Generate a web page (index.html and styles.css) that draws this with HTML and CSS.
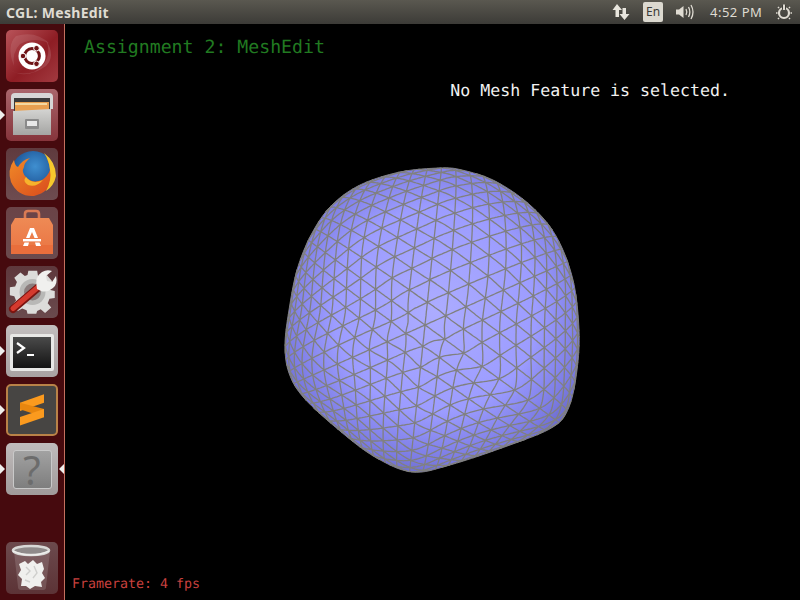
FILE: index.html
```html
<!DOCTYPE html>
<html lang="en">
<head>
    <meta charset="UTF-8">
    <title>CGL: MeshEdit</title>
    <link rel="stylesheet" href="styles.css">
</head>
<body>

<!-- Top Panel -->
<header class="panel">
    <span class="panel-title">CGL: MeshEdit</span>
    <div class="indicators">
        <svg class="ind-network" width="18" height="18" viewBox="0 0 18 18">
            <path d="M5 1 L10 7 H7 V14 H3.5 V7 H0.5 Z" fill="#e8e5dd"/>
            <path d="M12.5 17 L7.5 11 H10.5 V5 H14 V11 H17.5 Z" fill="#e8e5dd"/>
        </svg>
        <span class="ind-lang">En</span>
        <svg class="ind-sound" width="21" height="18" viewBox="0 0 21 18">
            <path d="M1 6.5 H4 L8.5 3 V15 L4 11.5 H1 Z" fill="#dfdbd2"/>
            <path d="M11 6 Q12.6 9 11 12" fill="none" stroke="#dfdbd2" stroke-width="1.3"/>
            <path d="M13.5 4 Q16.2 9 13.5 14" fill="none" stroke="#dfdbd2" stroke-width="1.3"/>
            <path d="M16 2 Q20 9 16 16" fill="none" stroke="#dfdbd2" stroke-width="1.3"/>
        </svg>
        <span class="ind-time">4:52 PM</span>
        <svg class="ind-power" width="16" height="18" viewBox="0 0 16 18">
            <circle cx="8" cy="10" r="5" fill="none" stroke="#dfdbd2" stroke-width="2.2"/>
            <path d="M8 2 V6.5" stroke="#3f3e39" stroke-width="4"/>
            <path d="M8 1.5 V7" stroke="#dfdbd2" stroke-width="2"/>
            <path d="M1.5 10 H0 M16 10 H14.5 M3 15 L2 16 M13 15 L14 16 M3 5 L2 4 M13 5 L14 4" stroke="#dfdbd2" stroke-width="1.6"/>
        </svg>
    </div>
</header>

<div class="desktop">
    <!-- Launcher -->
    <nav class="launcher">
        <div class="tile tile-dash">
            <svg width="52" height="52" viewBox="0 0 52 52">
                <path d="M4 40 Q20 50 40 36 Q50 26 40 10 Q48 30 28 42 Q14 46 4 40 Z" fill="#fff" opacity="0.13"/>
                <path d="M10 6 Q30 0 44 14 Q30 6 14 14 Q6 22 8 36 Q0 16 10 6 Z" fill="#fff" opacity="0.1"/>
                <circle cx="26" cy="26" r="13.5" fill="#fff"/>
                <circle cx="26" cy="26" r="7.4" fill="none" stroke="#6f1417" stroke-width="3"/>
                <g fill="#6f1417" stroke="#fff" stroke-width="1">
                    <circle cx="17" cy="26" r="2.8"/>
                    <circle cx="30.5" cy="18.2" r="2.8"/>
                    <circle cx="30.5" cy="33.8" r="2.8"/>
                </g>
            </svg>
        </div>
        <div class="tile tile-files running">
            <svg width="52" height="52" viewBox="0 0 52 52">
                <defs>
                    <linearGradient id="cabinetFront" x1="0" y1="0" x2="0" y2="1">
                        <stop offset="0" stop-color="#d4d4d2"/>
                        <stop offset="1" stop-color="#a5a5a3"/>
                    </linearGradient>
                </defs>
                <path d="M5 8 Q5 4 9 4 H43 Q47 4 47 8 V20 H5 Z" fill="#d6d6d6"/>
                <rect x="8" y="9" width="36" height="14" fill="#3a3a3a"/>
                <rect x="9" y="13" width="34" height="11" fill="#e8a050"/>
                <rect x="9" y="14" width="32" height="2" fill="#f4d8a0"/>
                <path d="M7 22 L45 20 V46 H7 Z" fill="url(#cabinetFront)"/>
                <rect x="19" y="30" width="14" height="10" rx="1" fill="#8a8a8a"/>
                <rect x="21" y="32" width="10" height="5" fill="#e8e8e8"/>
            </svg>
        </div>
        <div class="tile tile-firefox">
            <svg width="52" height="52" viewBox="0 0 52 52">
                <defs>
                    <radialGradient id="foxGlobe" cx="0.55" cy="0.35" r="0.6">
                        <stop offset="0" stop-color="#3f8fd0"/>
                        <stop offset="1" stop-color="#174a8c"/>
                    </radialGradient>
                    <linearGradient id="foxFur" x1="0" y1="0" x2="1" y2="1">
                        <stop offset="0" stop-color="#f08a28"/>
                        <stop offset="1" stop-color="#d8481c"/>
                    </linearGradient>
                </defs>
                <circle cx="27" cy="25" r="22" fill="url(#foxGlobe)"/>
                <path d="M40 10 Q50 20 48 30 Q44 44 28 48 Q12 49 5 34 Q1 22 8 12 Q9 18 12 19 Q16 12 24 10 Q18 15 18 19 Q15 24 20 29 Q26 36 36 32 Q42 28 44 22 Q44 15 40 10 Z" fill="url(#foxFur)"/>
                <path d="M38 5 Q50 14 50 28 Q48 38 40 43 Q46 32 44 22 Q43 12 38 5 Z" fill="#f6c82c"/>
                <path d="M20 29 Q26 37 37 32 Q30 40 22 37 Q16 33 20 29 Z" fill="#f7b32c"/>
            </svg>
        </div>
        <div class="tile tile-store">
            <svg width="52" height="52" viewBox="0 0 52 52">
                <defs>
                    <linearGradient id="storeBag" x1="0" y1="0" x2="0" y2="1">
                        <stop offset="0" stop-color="#ee8a55"/>
                        <stop offset="1" stop-color="#ea7442"/>
                    </linearGradient>
                </defs>
                <path d="M19 16 V7 Q19 4 22 4 H30 Q33 4 33 7 V16" fill="none" stroke="#d97a54" stroke-width="2.6"/>
                <path d="M9 11 H43 L47 18 V47 H5 V18 Z" fill="url(#storeBag)"/>
                <path d="M5 38 H47 V47 H5 Z" fill="#e96e3c"/>
                <path d="M24 21 H28 L32 31 H28.5 L26 25 L23.5 31 H20 Z" fill="#fff"/>
                <rect x="17" y="32" width="18" height="2.4" fill="#fff"/>
                <path d="M18.5 35.5 H23 L22 39 H17 Z M29 35.5 H33.5 L35 39 H30 Z" fill="#fff"/>
            </svg>
        </div>
        <div class="tile tile-settings">
            <svg width="52" height="52" viewBox="0 0 52 52">
                <path d="M22 3 H32 L33 9 L38 11 L43 8 L49 15 L45 20 L47 25 L52 26 V34 L46 35 L44 40 L48 45 L41 51 L36 47 L32 49 L31 52 H21 L20 48 L15 46 L10 49 L4 42 L8 37 L6 32 L1 31 V22 L7 21 L9 16 L6 11 L13 5 L18 9 L21 8 Z" transform="translate(3 2) scale(0.88)" fill="#dcdcda"/>
                <circle cx="26.5" cy="26" r="13" fill="#b8b8b6"/>
                <circle cx="26.5" cy="26" r="8.5" fill="#8a7c7c"/>
                <path d="M7 43 L34 20" stroke="#7a1410" stroke-width="8" stroke-linecap="round"/>
                <path d="M7 42.5 L34 19.5" stroke="#d43a2e" stroke-width="5" stroke-linecap="round"/>
                <path d="M31 23 Q28 11 36 6 Q41 3 46 5 L40 10 L41 15 L46 16 L50 10 Q52 18 47 22 Q41 27 35 25 Z" fill="#f0f0ee"/>
            </svg>
        </div>
        <div class="tile tile-terminal running">
            <svg width="52" height="52" viewBox="0 0 52 52">
                <defs>
                    <linearGradient id="termScreen" x1="0" y1="0" x2="0" y2="1">
                        <stop offset="0" stop-color="#4a4a4a"/>
                        <stop offset="1" stop-color="#141414"/>
                    </linearGradient>
                </defs>
                <rect x="4" y="9" width="44" height="37" rx="2" fill="#e8e8e6"/>
                <rect x="7" y="12" width="38" height="31" fill="url(#termScreen)"/>
                <path d="M11 18 L18 23 L11 28" fill="none" stroke="#fff" stroke-width="2.2"/>
                <path d="M21 30 H28" stroke="#fff" stroke-width="2"/>
            </svg>
        </div>
        <div class="tile tile-sublime running">
            <svg width="52" height="52" viewBox="0 0 52 52">
                <path d="M14 18.7 L38 10.3 V18.7 L14 27 Z" fill="#fb9a1e"/>
                <path d="M14 18.7 L38 25 V33.3 L14 25.3 Z" fill="#e8860f"/>
                <path d="M14 33 L38 25 V33.3 L14 41.5 Z" fill="#fb9a1e"/>
            </svg>
        </div>
        <div class="tile tile-help running focused">
            <span class="help-box">?</span>
        </div>
        <div class="tile tile-trash">
            <svg width="52" height="52" viewBox="0 0 52 52">
                <path d="M8 9 L12 45 Q12 48 15 48 H37 Q40 48 40 45 L44 9 Z" fill="#fff" opacity="0.14"/>
                <path d="M13 22 L19 19 L22 22 L27 18 L31 22 L36 20 L38 27 L36 31 L39 36 L35 40 L36 45 L29 44 L24 47 L20 44 L15 44 L16 37 L12 33 L15 28 Z" fill="#f0f0ee"/>
                <path d="M20 25 L24 29 L20 33 M28 24 L31 31 L27 36 M19 38 L24 40" fill="none" stroke="#cfcfcd" stroke-width="1.4"/>
                <ellipse cx="25" cy="8.5" rx="18" ry="4.5" fill="#8f8a8a" stroke="#d8d8d6" stroke-width="2.6"/>
                <path d="M7 9 Q25 17 43 9" fill="none" stroke="#eeeeec" stroke-width="1.6"/>
            </svg>
        </div>
    </nav>

    <!-- OpenGL viewport -->
    <main class="viewport">
        <svg id="meshView" class="mesh-view" width="735" height="576" viewBox="65 24 735 576">
            <defs>
                <radialGradient id="meshShade" gradientUnits="userSpaceOnUse" cx="435" cy="310" r="170">
                    <stop offset="0" stop-color="#acacff"/>
                    <stop offset="0.6" stop-color="#9c9cff"/>
                    <stop offset="0.88" stop-color="#7c7ce4"/>
                    <stop offset="1" stop-color="#6a6ac8"/>
                </radialGradient>
            </defs>
        </svg>
        <h1 class="title">Assignment 2: MeshEdit</h1>
        <p class="status">No Mesh Feature is selected.</p>
        <p class="framerate">Framerate: 4 fps</p>
    </main>
</div>

<script src="mesh.js"></script>
</body>
</html>
```

FILE: styles.css
```css
/* General Page Styling */
body {
    margin: 0;
    width: 800px;
    height: 600px;
    display: flex;
    flex-direction: column;
    overflow: hidden;
    background: #000;
    font-family: "Noto Sans", sans-serif;
}

/* Top Panel */
.panel {
    height: 24px;
    flex: none;
    display: flex;
    align-items: center;
    justify-content: space-between;
    padding: 0 8px 0 6px;
    background: linear-gradient(#5a5850, #3c3b37);
    color: #dfdbd2;
    font-size: 13px;
}

.panel-title {
    font-size: 14px;
    font-weight: 700;
    letter-spacing: 0.3px;
}

.indicators {
    display: flex;
    align-items: center;
}

.ind-network {
    margin-right: 13px;
}

.ind-lang {
    width: 20px;
    height: 20px;
    margin-right: 12px;
    border-radius: 2px;
    background: #dcd9d0;
    color: #3c3b37;
    font-size: 12px;
    line-height: 20px;
    text-align: center;
}

.ind-sound {
    margin-right: 14px;
}

.ind-time {
    width: 52px;
    margin-right: 14px;
    white-space: nowrap;
    letter-spacing: 0.5px;
}

/* Desktop */
.desktop {
    flex: 1;
    display: flex;
    min-height: 0;
}

/* Launcher */
.launcher {
    width: 64px;
    height: 564px;
    flex: none;
    display: flex;
    flex-direction: column;
    gap: 7px;
    padding: 6px 0;
    background: #460a0e;
    border-right: 1px solid #c4705f;
}

.tile {
    position: relative;
    width: 52px;
    height: 52px;
    flex: none;
    margin-left: 6px;
    border-radius: 5px;
    box-sizing: border-box;
}

.tile svg {
    display: block;
}

.tile-dash {
    background: linear-gradient(135deg, #b9545a, #8e1d24 55%, #a23a40);
}

.tile-files {
    background: linear-gradient(#a9656b, #86343b);
}

.tile-firefox {
    background: linear-gradient(#5f3a3e, #6e4c50);
}

.tile-store {
    background: linear-gradient(#6a4347, #6a4a4d);
}

.tile-settings {
    background: linear-gradient(#5e383c, #6a4a4d);
}

.tile-terminal {
    background: linear-gradient(#c2bebe, #a8a2a2);
}

.tile-sublime {
    background: #474543;
    border: 2px solid #b98248;
}

.tile-sublime svg {
    margin: -2px;
}

.tile-help {
    display: flex;
    align-items: center;
    justify-content: center;
    background: linear-gradient(#c0bcbc, #a09a9a);
}

.help-box {
    width: 39px;
    height: 39px;
    border-radius: 3px;
    border: 1px solid #c9c9c9;
    box-sizing: border-box;
    background: linear-gradient(#a2a2a2, #7e7e7e);
    color: #6c6c6c;
    font-size: 40px;
    line-height: 37px;
    text-align: center;
}

.tile-trash {
    margin-top: auto;
    background: linear-gradient(#6c4a4d, #5c3336);
}

/* Launcher pips */
.running::before {
    content: "";
    position: absolute;
    left: -6px;
    top: 21px;
    border-left: 5px solid #eeeeec;
    border-top: 5px solid transparent;
    border-bottom: 5px solid transparent;
}

.tile-sublime.running::before {
    left: -8px;
    top: 19px;
}

.focused::after {
    content: "";
    position: absolute;
    right: -6px;
    top: 21px;
    border-right: 5px solid #eeeeec;
    border-top: 5px solid transparent;
    border-bottom: 5px solid transparent;
}

/* Viewport */
.viewport {
    position: relative;
    flex: 1;
    display: flex;
    flex-direction: column;
    font-family: "DejaVu Sans Mono", monospace;
    text-rendering: geometricPrecision;
}

.mesh-view {
    position: absolute;
    left: 0;
    top: 0;
}

.title {
    position: relative;
    margin: 14px 0 0 19px;
    color: #217a21;
    font-size: 18.2px;
    font-weight: 400;
    line-height: 20px;
}

.status {
    position: relative;
    align-self: flex-end;
    margin: 23px 70px 0 0;
    color: #f2f2f2;
    font-size: 16.6px;
    line-height: 20px;
}

.framerate {
    position: relative;
    margin: auto 0 7px 7px;
    color: #c8403e;
    font-size: 13.3px;
    line-height: 16px;
}
```

FILE: mesh.js
```js
// blob outline, in window pixels
const outline = [
    [440, 168], [400, 172], [360, 185], [331, 206], [311, 235], [297, 270],
    [289, 310], [285, 345], [289, 373], [304, 398], [340, 431], [375, 457],
    [412, 472], [450, 465], [510, 445], [553, 427], [569, 407], [577, 370],
    [579, 330], [573, 280], [556, 236], [530, 205], [495, 181], [462, 170]
];
const center = [425, 325];
const svgNS = "http://www.w3.org/2000/svg";
const view = document.getElementById("meshView");

// smooth the outline with a catmull-rom pass
function smooth(points, steps) {
    let out = [];
    let n = points.length;
    for (let i = 0; i < n; i++) {
        let p0 = points[(i + n - 1) % n], p1 = points[i];
        let p2 = points[(i + 1) % n], p3 = points[(i + 2) % n];
        for (let s = 0; s < steps; s++) {
            let t = s / steps;
            let pt = [0, 1].map(k => 0.5 * (2 * p1[k] + (p2[k] - p0[k]) * t +
                (2 * p0[k] - 5 * p1[k] + 4 * p2[k] - p3[k]) * t * t +
                (3 * p1[k] - p0[k] - 3 * p2[k] + p3[k]) * t * t * t));
            out.push(pt);
        }
    }
    return out;
}

const dense = smooth(outline, 8);

// radius of the blob along an angle
function radiusAt(angle) {
    let dx = Math.cos(angle), dy = Math.sin(angle);
    let best = 0;
    for (let i = 0; i < dense.length; i++) {
        let a = dense[i], b = dense[(i + 1) % dense.length];
        let ax = a[0] - center[0], ay = a[1] - center[1];
        let ex = b[0] - a[0], ey = b[1] - a[1];
        let det = dx * ey - dy * ex;
        if (Math.abs(det) < 1e-9) continue;
        let r = (ax * ey - ay * ex) / det;
        let u = (ax * dy - ay * dx) / det;
        if (r > 0 && u >= 0 && u <= 1) best = Math.max(best, r);
    }
    return best;
}

const radii = [];
for (let i = 0; i < 360; i++) radii.push(radiusAt(i * Math.PI / 180));

// squeeze the flat lattice towards the rim, like a ball seen from the front
const bulge = 0.92 * Math.PI / 2;

function project(x, y) {
    let rho = Math.hypot(x, y);
    let angle = Math.atan2(y, x);
    let deg = (angle * 180 / Math.PI + 360) % 360;
    let i = Math.floor(deg), f = deg - i;
    let r = radii[i % 360] * (1 - f) + radii[(i + 1) % 360] * f;
    let scale = Math.sin(rho * bulge) / Math.sin(bulge) * r;
    return [center[0] + Math.cos(angle) * scale, center[1] + Math.sin(angle) * scale];
}

function add(tag, attrs) {
    let el = document.createElementNS(svgNS, tag);
    for (let key in attrs) el.setAttribute(key, attrs[key]);
    view.appendChild(el);
    return el;
}

add("polygon", {
    points: dense.map(p => p.join(",")).join(" "),
    fill: "url(#meshShade)",
    stroke: "#808080",
    "stroke-width": 1
});

// three families of lattice lines
function lattice(tilt, edge) {
    let spacing = edge * Math.sqrt(3) / 2;
    let count = Math.ceil(1.05 / spacing);
    let d = "";
    for (let family = 0; family < 3; family++) {
        let a = tilt + family * Math.PI / 3;
        let nx = Math.cos(a), ny = Math.sin(a);
        for (let i = -count; i <= count; i++) {
            let run = [];
            for (let t = -1.05; t <= 1.05; t += 0.01) {
                let x = nx * i * spacing - ny * t, y = ny * i * spacing + nx * t;
                if (Math.hypot(x, y) <= 1) {
                    let p = project(x, y);
                    run.push(p[0].toFixed(1) + " " + p[1].toFixed(1));
                }
            }
            if (run.length > 1) d += "M" + run.join("L");
        }
    }
    return d;
}

add("path", {
    d: lattice(6 * Math.PI / 180, 0.1),
    fill: "none",
    stroke: "#808080",
    "stroke-width": 1.3
});
```
